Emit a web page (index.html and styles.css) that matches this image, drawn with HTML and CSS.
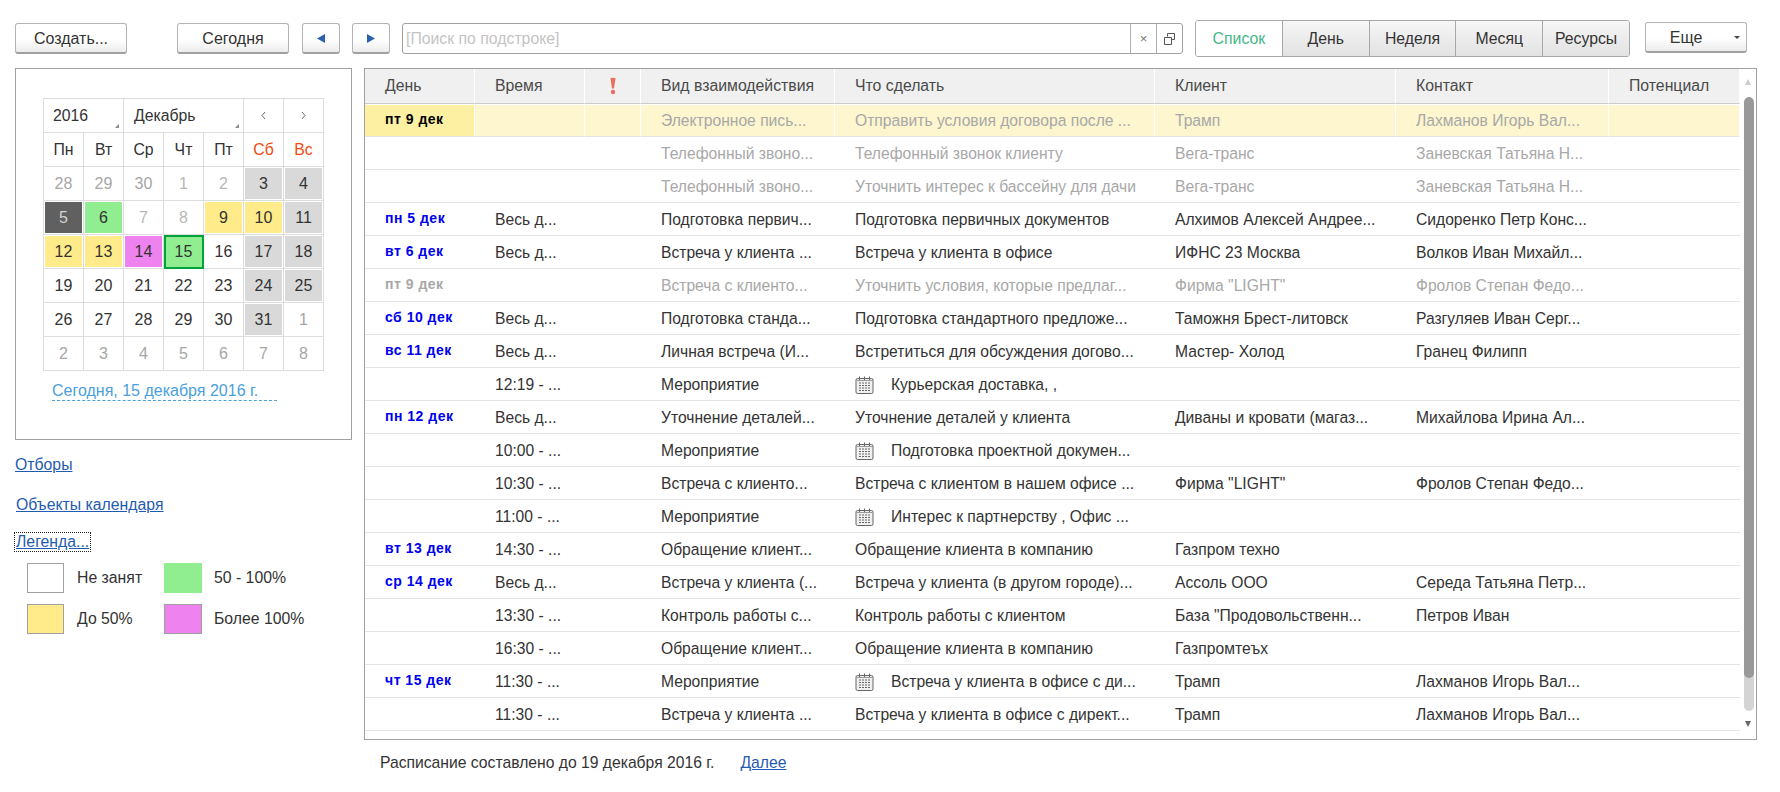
FILE: index.html
```html
<!DOCTYPE html>
<html lang="ru">
<head>
<meta charset="utf-8">
<title>Календарь</title>
<link rel="stylesheet" href="styles.css">
</head>
<body>
<svg class="defs" width="0" height="0" aria-hidden="true"><defs>
<symbol id="cal" viewBox="0 0 19 18">
<rect x="1" y="2.500" width="17" height="15" rx="1.500" fill="#f0f0f0" stroke="#666"/>
<path d="M1.500 4.500h16" stroke="#999"/>
<path d="M4.500 .5v3.500M9.500 .5v3.500M14.500 .5v3.500" stroke="#666"/>
<path d="M4 7h11M4 9.500h11M4 12h11M4 14.500h11" stroke="#666" stroke-dasharray="2 1"/>
</symbol>
</defs></svg>
<header class="toolbar">
  <button class="btn btn-create">Создать...</button>
  <button class="btn btn-today">Сегодня</button>
  <button class="btn btn-nav"><svg width="8" height="9" viewBox="0 0 8 9"><path d="M8 0v9L0 4.500z" fill="#2a62ad"/></svg></button>
  <button class="btn btn-nav"><svg width="8" height="9" viewBox="0 0 8 9"><path d="M0 0v9l8-4.500z" fill="#2a62ad"/></svg></button>
  <div class="search">
    <span class="search-ph">[Поиск по подстроке]</span>
    <span class="search-btn search-x">×</span>
    <span class="search-btn"><svg width="11" height="12" viewBox="0 0 11 12"><path d="M3.500 3.500V.5h7v6h-3M.5 4.500h7v7h-7z" fill="none" stroke="#555"/></svg></span>
  </div>
  <nav class="seg">
    <span class="seg-item seg-active">Список</span>
    <span class="seg-item">День</span>
    <span class="seg-item">Неделя</span>
    <span class="seg-item">Месяц</span>
    <span class="seg-item">Ресурсы</span>
  </nav>
  <button class="btn btn-more"><span class="more-label">Еще</span><svg class="more-caret" width="6" height="3" viewBox="0 0 6 3"><path d="M0 0h6L3 3z" fill="#444"/></svg></button>
</header>

<main class="main">
  <aside class="side">
    <section class="cal-panel">
      <div class="cal-grid">
        <div class="cal-head">
          <span class="cal-sel cal-year">2016</span>
          <span class="cal-sel cal-month">Декабрь</span>
          <span class="cal-arrow"><svg width="5" height="9" viewBox="0 0 5 9"><path d="M4 1L1 4.500 4 8" fill="none" stroke="#666"/></svg></span>
          <span class="cal-arrow"><svg width="5" height="9" viewBox="0 0 5 9"><path d="M1 1l3 3.500L1 8" fill="none" stroke="#666"/></svg></span>
        </div>
        <div class="cal-row">
          <span class="wd">Пн</span><span class="wd">Вт</span><span class="wd">Ср</span><span class="wd">Чт</span><span class="wd">Пт</span><span class="wd wd-off">Сб</span><span class="wd wd-off">Вс</span>
        </div>
        <div class="cal-row">
          <span class="d"><b class="f out">28</b></span><span class="d"><b class="f out">29</b></span><span class="d"><b class="f out">30</b></span><span class="d"><b class="f out2">1</b></span><span class="d"><b class="f out2">2</b></span><span class="d"><b class="f gray">3</b></span><span class="d"><b class="f gray">4</b></span>
        </div>
        <div class="cal-row">
          <span class="d"><b class="f dark">5</b></span><span class="d"><b class="f green">6</b></span><span class="d"><b class="f out2">7</b></span><span class="d"><b class="f out2">8</b></span><span class="d"><b class="f yellow">9</b></span><span class="d"><b class="f yellow">10</b></span><span class="d"><b class="f gray">11</b></span>
        </div>
        <div class="cal-row">
          <span class="d"><b class="f yellow">12</b></span><span class="d"><b class="f yellow">13</b></span><span class="d"><b class="f pink">14</b></span><span class="d d-today"><b class="f green">15</b></span><span class="d"><b class="f">16</b></span><span class="d"><b class="f gray">17</b></span><span class="d"><b class="f gray">18</b></span>
        </div>
        <div class="cal-row">
          <span class="d"><b class="f">19</b></span><span class="d"><b class="f">20</b></span><span class="d"><b class="f">21</b></span><span class="d"><b class="f">22</b></span><span class="d"><b class="f">23</b></span><span class="d"><b class="f gray">24</b></span><span class="d"><b class="f gray">25</b></span>
        </div>
        <div class="cal-row">
          <span class="d"><b class="f">26</b></span><span class="d"><b class="f">27</b></span><span class="d"><b class="f">28</b></span><span class="d"><b class="f">29</b></span><span class="d"><b class="f">30</b></span><span class="d"><b class="f gray">31</b></span><span class="d"><b class="f out">1</b></span>
        </div>
        <div class="cal-row">
          <span class="d"><b class="f out">2</b></span><span class="d"><b class="f out">3</b></span><span class="d"><b class="f out">4</b></span><span class="d"><b class="f out">5</b></span><span class="d"><b class="f out">6</b></span><span class="d"><b class="f out">7</b></span><span class="d"><b class="f out">8</b></span>
        </div>
      </div>
      <a class="cal-today" href="#">Сегодня, 15 декабря 2016 г.</a>
    </section>
    <a class="side-link link-filters" href="#">Отборы</a>
    <a class="side-link link-objects" href="#">Объекты календаря</a>
    <a class="side-link link-legend" href="#">Легенда...</a>
    <div class="legend">
      <span class="sw sw-free"></span><span>Не занят</span>
      <span class="sw sw-green"></span><span>50 - 100%</span>
      <span class="sw sw-yellow"></span><span>До 50%</span>
      <span class="sw sw-pink"></span><span>Более 100%</span>
    </div>
  </aside>

  <section class="list">
    <div class="list-body">
      <table class="tbl">
        <colgroup><col class="c1"><col class="c2"><col class="c3"><col class="c4"><col class="c5"><col class="c6"><col class="c7"><col class="c8"></colgroup>
        <thead><tr>
          <th>День</th><th>Время</th><th class="th-imp"><svg width="8" height="18" viewBox="0 0 8 18"><path d="M1.500 1.500C1.500 .5 6.500 .5 6.500 1.500L5 11.500H3z" fill="#e8705f"/><circle cx="4" cy="15" r="2.200" fill="#e8705f"/></svg></th><th>Вид взаимодействия</th><th>Что сделать</th><th>Клиент</th><th>Контакт</th><th>Потенциал</th>
        </tr></thead>
        <tbody>
          <tr class="sel mute"><td class="day">пт 9 дек</td><td></td><td></td><td>Электронное пись...</td><td>Отправить условия договора после ...</td><td>Трамп</td><td>Лахманов Игорь Вал...</td><td></td></tr>
          <tr class="mute"><td></td><td></td><td></td><td>Телефонный звоно...</td><td>Телефонный звонок клиенту</td><td>Вега-транс</td><td>Заневская Татьяна Н...</td><td></td></tr>
          <tr class="mute"><td></td><td></td><td></td><td>Телефонный звоно...</td><td>Уточнить интерес к бассейну для дачи</td><td>Вега-транс</td><td>Заневская Татьяна Н...</td><td></td></tr>
          <tr><td class="day">пн 5 дек</td><td>Весь д...</td><td></td><td>Подготовка первич...</td><td>Подготовка первичных документов</td><td>Алхимов Алексей Андрее...</td><td>Сидоренко Петр Конс...</td><td></td></tr>
          <tr><td class="day">вт 6 дек</td><td>Весь д...</td><td></td><td>Встреча у клиента ...</td><td>Встреча у клиента в офисе</td><td>ИФНС 23 Москва</td><td>Волков Иван Михайл...</td><td></td></tr>
          <tr class="mute"><td class="day">пт 9 дек</td><td></td><td></td><td>Встреча с клиенто...</td><td>Уточнить условия, которые предлаг...</td><td>Фирма "LIGHT"</td><td>Фролов Степан Федо...</td><td></td></tr>
          <tr><td class="day">сб 10 дек</td><td>Весь д...</td><td></td><td>Подготовка станда...</td><td>Подготовка стандартного предложе...</td><td>Таможня Брест-литовск</td><td>Разгуляев Иван Серг...</td><td></td></tr>
          <tr><td class="day">вс 11 дек</td><td>Весь д...</td><td></td><td>Личная встреча (И...</td><td>Встретиться для обсуждения догово...</td><td>Мастер- Холод</td><td>Гранец Филипп</td><td></td></tr>
          <tr><td></td><td>12:19 - ...</td><td></td><td>Мероприятие</td><td><span class="evt"><svg width="19" height="18"><use href="#cal"/></svg>Курьерская доставка, ,</span></td><td></td><td></td><td></td></tr>
          <tr><td class="day">пн 12 дек</td><td>Весь д...</td><td></td><td>Уточнение деталей...</td><td>Уточнение деталей у клиента</td><td>Диваны и кровати (магаз...</td><td>Михайлова Ирина Ал...</td><td></td></tr>
          <tr><td></td><td>10:00 - ...</td><td></td><td>Мероприятие</td><td><span class="evt"><svg width="19" height="18"><use href="#cal"/></svg>Подготовка проектной докумен...</span></td><td></td><td></td><td></td></tr>
          <tr><td></td><td>10:30 - ...</td><td></td><td>Встреча с клиенто...</td><td>Встреча с клиентом в нашем офисе ...</td><td>Фирма "LIGHT"</td><td>Фролов Степан Федо...</td><td></td></tr>
          <tr><td></td><td>11:00 - ...</td><td></td><td>Мероприятие</td><td><span class="evt"><svg width="19" height="18"><use href="#cal"/></svg>Интерес к партнерству  , Офис ...</span></td><td></td><td></td><td></td></tr>
          <tr><td class="day">вт 13 дек</td><td>14:30 - ...</td><td></td><td>Обращение клиент...</td><td>Обращение клиента в компанию</td><td>Газпром техно</td><td></td><td></td></tr>
          <tr><td class="day">ср 14 дек</td><td>Весь д...</td><td></td><td>Встреча у клиента (...</td><td>Встреча у клиента (в другом городе)...</td><td>Ассоль ООО</td><td>Середа Татьяна Петр...</td><td></td></tr>
          <tr><td></td><td>13:30 - ...</td><td></td><td>Контроль работы с...</td><td>Контроль работы с клиентом</td><td>База "Продовольственн...</td><td>Петров Иван</td><td></td></tr>
          <tr><td></td><td>16:30 - ...</td><td></td><td>Обращение клиент...</td><td>Обращение клиента в компанию</td><td>Газпромтеъх</td><td></td><td></td></tr>
          <tr><td class="day">чт 15 дек</td><td>11:30 - ...</td><td></td><td>Мероприятие</td><td><span class="evt"><svg width="19" height="18"><use href="#cal"/></svg>Встреча у клиента в офисе с ди...</span></td><td>Трамп</td><td>Лахманов Игорь Вал...</td><td></td></tr>
          <tr><td></td><td>11:30 - ...</td><td></td><td>Встреча у клиента ...</td><td>Встреча у клиента в офисе с директ...</td><td>Трамп</td><td>Лахманов Игорь Вал...</td><td></td></tr>
        </tbody>
      </table>
    </div>
    <div class="scroll">
      <svg class="sc-up" width="6" height="6" viewBox="0 0 6 6"><path d="M3 0l3 6H0z" fill="#ccc"/></svg>
      <div class="sc-track"><div class="sc-thumb"></div></div>
      <svg class="sc-down" width="6" height="6" viewBox="0 0 6 6"><path d="M0 0h6L3 6z" fill="#666"/></svg>
    </div>
  </section>
</main>

<footer class="foot">
  <span>Расписание составлено до 19 декабря 2016 г.</span>
  <a class="foot-link" href="#">Далее</a>
</footer>
</body>
</html>
```

FILE: styles.css
```css
* { box-sizing: border-box; }
html, body { margin: 0; padding: 0; }
body {
  width: 1780px;
  height: 792px;
  overflow: hidden;
  padding: 20px 0 0 15px;
  background: #fff;
  color: #333;
  font: 15.8px/18px "Liberation Sans", Arial, sans-serif;
}
.defs { position: absolute; }
.toolbar { display: flex; align-items: center; height: 37px; }
.btn {
  height: 31px;
  padding: 1px 0 0;
  border: 1px solid #b4b4b4;
  border-bottom: 2px solid #a0a0a0;
  border-radius: 3px;
  background: linear-gradient(#fff 55%, #ececec);
  color: #333;
  font: inherit;
  font-size: 16px;
  display: flex;
  align-items: center;
  justify-content: center;
}
.btn-create { width: 112px; }
.btn-today { width: 112px; margin-left: 50px; }
.btn-nav { width: 38px; margin-left: 13px; }
.btn-nav + .btn-nav { margin-left: 12px; }
.search {
  width: 781px;
  height: 31px;
  margin-left: 12px;
  border: 1px solid #a0a0a0;
  border-radius: 3px;
  display: flex;
  align-items: center;
}
.search-ph { flex: 1; padding-left: 3px; color: #c4c4c4; }
.search-btn {
  width: 26px;
  height: 29px;
  border-left: 1px solid #b0b0b0;
  display: flex;
  align-items: center;
  justify-content: center;
}
.search-x { color: #777; font-size: 13px; }
.seg {
  width: 435px;
  height: 37px;
  margin-left: 12px;
  border: 1px solid #a8a8a8;
  border-radius: 3px;
  display: flex;
  overflow: hidden;
}
.seg-item {
  width: 87px;
  border-left: 1px solid #a8a8a8;
  background: linear-gradient(#f6f6f6, #e2e2e2);
  display: flex;
  align-items: center;
  justify-content: center;
}
.seg-active { width: 86px; border-left: 0; background: #fff; color: #45b88a; }
.btn-more {
  width: 102px;
  margin: -2px 0 0 15px;
  justify-content: flex-start;
}
.more-label { width: 80px; text-align: center; }
.more-caret { margin-left: 8px; }

.main { display: flex; height: 672px; margin-top: 11px; }
.side { width: 337px; flex: none; display: flex; flex-direction: column; align-items: flex-start; }
.cal-panel {
  width: 337px;
  height: 372px;
  border: 1px solid #a0a0a0;
  padding: 29px 0 0 27px;
}
.cal-grid { width: 281px; border-top: 1px solid #ddd; border-left: 1px solid #ddd; }
.cal-head, .cal-row { display: flex; height: 34px; }
.cal-sel {
  position: relative;
  height: 34px;
  border-right: 1px solid #ddd;
  border-bottom: 1px solid #ddd;
  display: flex;
  align-items: center;
}
.cal-sel::after {
  content: "";
  position: absolute;
  right: 4px;
  bottom: 4px;
  border-left: 4px solid transparent;
  border-bottom: 4px solid #888;
}
.cal-year { width: 80px; padding-left: 9px; }
.cal-month { width: 120px; padding-left: 10px; }
.cal-arrow, .wd, .d {
  width: 40px;
  height: 34px;
  display: flex;
  align-items: center;
  justify-content: center;
  border-right: 1px solid #ddd;
  border-bottom: 1px solid #ddd;
}
.wd-off { color: #f04a10; }
.d { padding: 1px; font-size: 16px; }
.f {
  width: 100%;
  height: 100%;
  font-weight: 400;
  display: flex;
  align-items: center;
  justify-content: center;
}
.out { color: #a6a6a6; }
.out2 { color: #b8b8b8; }
.gray { background: #d9d9d9; }
.dark { background: #606060; color: #d4d4d4; }
.green { background: #90ee90; }
.yellow { background: #ffeb8a; }
.pink { background: #ee82ee; }
.d-today { padding: 0; outline: 2px solid #00a23c; outline-offset: -2px; }
.cal-today {
  display: inline-block;
  width: 225px;
  margin: 11px 0 0 9px;
  border-bottom: 1px dashed #4aa0dc;
  color: #4aa0dc;
  font-size: 16px;
  text-decoration: none;
}
.side-link { color: #1f5bb0; text-decoration: underline; }
.link-filters { margin-top: 16px; }
.link-objects { margin: 22px 0 0 1px; }
.link-legend { margin-top: 19px; outline: 1px dotted #222; padding: 0 1px; }
.legend {
  display: grid;
  grid-template-columns: 37px 100px 38px auto;
  grid-auto-rows: 30px;
  row-gap: 11px;
  align-items: center;
  margin: 12px 0 0 12px;
}
.legend span:nth-child(even) { padding-left: 13px; }
.legend span:nth-child(4n) { padding-left: 12px; }
.sw { display: block; height: 30px; border: 1px solid #a0a0a0; }
.sw-green { background: #90ee90; border-color: #90ee90; }
.sw-yellow { background: #ffeb8a; }
.sw-pink { background: #ee82ee; }

.list {
  width: 1393px;
  margin-left: 12px;
  height: 672px;
  border: 1px solid #a0a0a0;
  display: flex;
}
.list-body { width: 1375px; overflow: hidden; }
.tbl { width: 1375px; table-layout: fixed; border-collapse: separate; border-spacing: 0; }
.c1, .c2 { width: 110px; }
.c3 { width: 56px; }
.c4 { width: 194px; }
.c5 { width: 320px; }
.c6 { width: 241px; }
.c7 { width: 213px; }
.c8 { width: 131px; }
th {
  height: 35px;
  padding: 0 0 0 20px;
  border-right: 1px solid #fff;
  border-bottom: 1px solid #ccc;
  background: #f0f0f0;
  color: #4a4a4a;
  font-weight: 400;
  text-align: left;
}
.th-imp { padding: 0; text-align: center; }
.th-imp svg { display: block; margin: 0 auto; }
td {
  height: 33px;
  padding: 2px 0 0 20px;
  border-bottom: 1px solid #e4e4e4;
  font-size: 15.65px;
  white-space: nowrap;
  overflow: hidden;
}
td.day {
  color: #0000f0;
  font-weight: 700;
  font-size: 14px;
  letter-spacing: .5px;
  padding: 0 0 2px 20px;
}
.mute td { color: #a8a8a8; }
.mute td.day { color: #a8a8a8; }
.sel td {
  background: #fdf6cf;
  border-right: 1px solid #fff;
  box-shadow: inset 0 1px 0 #fff;
}
.sel td.day { background: #fdf0a3; color: #000; }
.evt { display: flex; align-items: center; gap: 17px; }
.scroll { flex: 1; display: flex; flex-direction: column; align-items: center; }
.sc-up { margin-top: 10px; margin-left: -1px; }
.sc-track {
  width: 10px;
  height: 614px;
  margin-top: 12px;
  margin-left: 2px;
  border-radius: 5px;
  background: #d4d4d4;
  overflow: hidden;
}
.sc-thumb { height: 581px; border-radius: 5px; background: #999; }
.sc-down { margin-top: 10px; }
.foot { display: flex; margin: 14px 0 0 365px; font-size: 15.7px; }
.foot-link { margin-left: 26px; color: #1f5bb0; text-decoration: underline; }
```
